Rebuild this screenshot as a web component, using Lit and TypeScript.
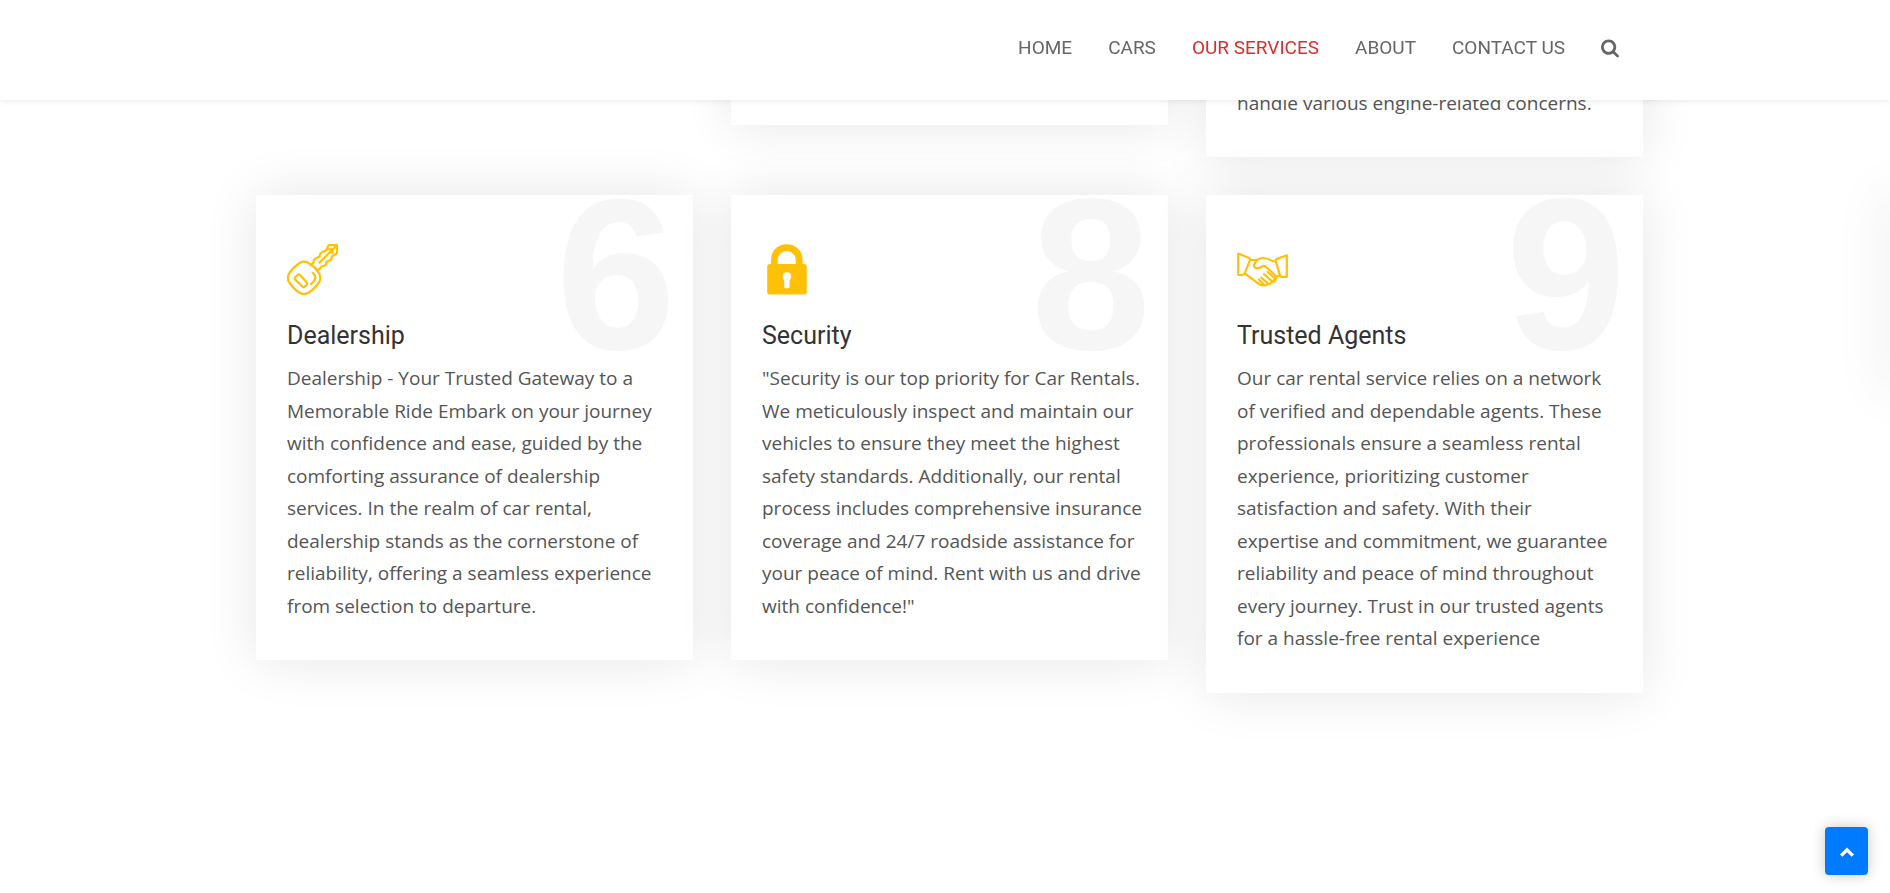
import { LitElement, html, css, svg } from "lit";
import { customElement, property } from "lit/decorators.js";

const keyIcon = svg`<svg class="icon" viewBox="0 0 51 51" fill="none" stroke="currentColor" stroke-width="2.200" stroke-linecap="round" stroke-linejoin="round" aria-hidden="true">
  <path d="M12.600 19Q17 16.400 21.400 19Q28.600 23 32.400 30Q34.200 34 32.400 37.600Q28 44.600 21.400 48.800Q17 51.200 12.600 48.800Q6 44.600 1.800 37.600Q0 34 1.800 30Q6 23.200 12.600 19Z"/>
  <path d="M12.800 30.800Q11.800 30 10.800 30.800L8 33.400Q7.200 34.400 8 35.400L15.600 42.800Q16.600 43.600 17.600 42.800L19.800 40.600Q20.600 39.600 19.800 38.600Z"/>
  <path d="M26 29Q28.800 31.600 28.200 34.200Q27.400 37.600 24 40"/>
  <path d="M24 21L26.600 18.400Q26.600 15.400 28.600 14.400L32.600 12.600Q32.800 9.200 35 8.200L39.400 6.200L41.600 1.200H50V9.200L45 12.400Q44.600 15.800 42.600 16.600L39.600 17.800Q39.200 21 37 21.800L34 22.800Q33 25.600 29.600 26.200"/>
  <path d="M32.600 18.600L49.600 1.400M42 5.400L45.800 5.200L45.600 9"/>
</svg>`;

const lockIcon = svg`<svg class="icon" viewBox="0 0 51 51" fill="currentColor" aria-hidden="true">
  <path fill-rule="evenodd" d="M9 20V16C9 7 15.500 0.300 24.800 0.300S40.600 7 40.600 16V20H42.600Q44.800 20.200 44.800 22.600V48Q44.800 50.500 42.300 50.500H8Q5.200 50.500 5.200 48V22.600Q5.200 20 8 20ZM15.800 20H33.800V16.200C33.800 10.800 29.800 7.200 24.800 7.200S15.800 10.800 15.800 16.200ZM22.200 36.200V42.600Q22.200 44.200 23.600 44.200H26Q27.600 44.200 27.600 42.600V36.200Q29.200 35 29.200 32.400Q28.800 28.200 24.900 28.200Q21 28.200 20.600 32.400Q20.600 35 22.200 36.200Z"/>
</svg>`;

const handshakeIcon = svg`<svg class="icon" viewBox="0 0 51 51" fill="none" stroke="currentColor" stroke-width="2.200" stroke-linecap="round" stroke-linejoin="round" aria-hidden="true">
  <path d="M1.200 9.600L12.200 14Q13.400 14.800 13 16.200L7.600 29.600Q7 31 5.600 31H1.200Z"/>
  <path d="M49.800 11.400L39.600 15Q38.400 15.600 38.800 17L43 31.600Q43.400 33 44.800 33H49.800Z"/>
  <path d="M13.400 16H20Q22.600 14 26 14Q31 14 34 16.400Q36.600 17.800 38.600 17.200"/>
  <path d="M20 16L17 20.600Q16.600 23.600 19.600 24.400Q22.600 24.400 25 22.400Q27 21.200 28.400 22.400L38.800 31.800Q40.600 34.600 37.200 35.600"/>
  <path d="M8.200 29.600L22 40.200Q25 41.600 28.600 41.200Q31 40.800 30.800 39.400L24.400 33.600"/>
  <path d="M30.800 39.600Q34.600 40.400 35 37.200L27 30.200M35 37.600Q39.400 37.600 38.400 34.600L30.600 28M22 35.400L26.600 40.400M41 31.800H43"/>
</svg>`;

@customElement("service-card")
export class ServiceCard extends LitElement {
  @property() heading = "";
  @property() text = "";
  @property() number = "";
  @property({ attribute: false }) icon: unknown = null;

  static styles = css`
    :host {
      display: block;
      position: relative;
      box-sizing: border-box;
      padding: 49px 25px 38px 31px;
      background: #fff;
      box-shadow: 0 0 50px rgba(0, 0, 0, 0.1);
    }
    .number {
      position: absolute;
      top: 19px;
      right: 17px;
      font: bold 216px/120px "Liberation Sans", Arial, sans-serif;
      color: #f6f6f6;
    }
    .content { position: relative; }
    .icon {
      display: block;
      width: 51px;
      height: 51px;
      margin-bottom: 25px;
      color: #ffc107;
    }
    .title {
      margin: 0 0 10px;
      font: 400 25px/32px Roboto, sans-serif;
      color: #333;
    }
    .text {
      margin: 0;
      font: 400 19px/1.71 "Open Sans", sans-serif;
      color: #555;
    }
  `;

  render() {
    return html`
      ${this.number ? html`<span class="number" aria-hidden="true">${this.number}</span>` : null}
      <div class="content">
        ${this.icon}
        ${this.heading ? html`<h3 class="title">${this.heading}</h3>` : null}
        ${this.text ? html`<p class="text">${this.text}</p>` : null}
      </div>
    `;
  }
}

const services = [
  {
    number: "6",
    icon: keyIcon,
    heading: "Dealership",
    text: "Dealership - Your Trusted Gateway to a Memorable Ride Embark on your journey with confidence and ease, guided by the comforting assurance of dealership services. In the realm of car rental, dealership stands as the cornerstone of reliability, offering a seamless experience from selection to departure.",
  },
  {
    number: "8",
    icon: lockIcon,
    heading: "Security",
    text: '"Security is our top priority for Car Rentals. We meticulously inspect and maintain our vehicles to ensure they meet the highest safety standards. Additionally, our rental process includes comprehensive insurance coverage and 24/7 roadside assistance for your peace of mind. Rent with us and drive with confidence!"',
  },
  {
    number: "9",
    icon: handshakeIcon,
    heading: "Trusted Agents",
    text: "Our car rental service relies on a network of verified and dependable agents. These professionals ensure a seamless rental experience, prioritizing customer satisfaction and safety. With their expertise and commitment, we guarantee reliability and peace of mind throughout every journey. Trust in our trusted agents for a hassle-free rental experience",
  },
];

const links = ["Home", "Cars", "Our Services", "About", "Contact Us"];

@customElement("app-root")
export class AppRoot extends LitElement {
  static styles = css`
    :host {
      display: block;
      position: relative;
      min-height: 100vh;
      overflow: hidden;
      background: #fff;
    }
    .header {
      position: fixed;
      inset: 0 0 auto;
      z-index: 2;
      padding-left: 9px;
      background: #fff;
      box-shadow: 0 0 6px rgba(0, 0, 0, 0.12);
    }
    .nav {
      display: flex;
      justify-content: flex-end;
      align-items: center;
      gap: 36px;
      box-sizing: border-box;
      height: 100px;
      max-width: 1387px;
      margin: 0 auto;
      padding: 0 24px 4px 0;
    }
    .link {
      font: 400 19px/24px Roboto, sans-serif;
      color: #666;
      text-decoration: none;
      text-transform: uppercase;
      white-space: nowrap;
    }
    .link.current { color: #db2d2e; }
    .search {
      display: block;
      padding: 0;
      border: 0;
      background: none;
      color: #666;
      cursor: pointer;
    }
    .search svg { display: block; width: 18px; height: 19px; }
    .main { padding: 0 0 80px 9px; }
    .grid {
      display: grid;
      grid-template-columns: repeat(3, minmax(0, 1fr));
      gap: 38px;
      align-items: start;
      max-width: 1387px;
      margin: 0 auto;
    }
    .previous { grid-column: 2; min-height: 125px; }
    .engine { padding-top: 87px; }
    .drawer {
      position: fixed;
      top: 190px;
      right: -10px;
      width: 10px;
      height: 204px;
      box-shadow: 0 0 50px rgba(0, 0, 0, 0.18);
    }
    .top {
      position: fixed;
      right: 22px;
      bottom: 18px;
      z-index: 3;
      display: grid;
      place-items: center;
      width: 43px;
      height: 48px;
      padding: 2px 0 0;
      border: 0;
      border-radius: 4px;
      background: #007bff;
      color: #fff;
      box-shadow: 0 0 14px rgba(0, 0, 0, 0.22);
      cursor: pointer;
    }
    .top svg { display: block; width: 16px; height: 12px; }
  `;

  private toTop() {
    window.scrollTo({ top: 0, behavior: "smooth" });
  }

  render() {
    return html`
      <header class="header">
        <nav class="nav" aria-label="Main">
          ${links.map(
            (name) => html`<a class="link ${name === "Our Services" ? "current" : ""}" href="#">${name}</a>`
          )}
          <button class="search" type="button" aria-label="Search">
            <svg viewBox="0 128 1664 1664" fill="currentColor" aria-hidden="true">
              <path d="M1152 832q0-185-131.500-316.500T704 384 387.500 515.500 256 832t131.500 316.500T704 1280t316.500-131.500T1152 832zm512 832q0 52-38 90t-90 38q-54 0-90-38l-343-342q-179 124-399 124-143 0-273.500-55.500t-225-150-150-225T0 832t55.500-273.500 150-225 225-150T704 128t273.500 55.500 225 150 150 225T1408 832q0 220-124 399l343 343q37 37 37 90z"/>
            </svg>
          </button>
        </nav>
      </header>
      <main class="main">
        <div class="grid">
          <service-card class="previous"></service-card>
          <service-card class="engine" .text=${"handle various engine-related concerns."}></service-card>
          ${services.map(
            (s) => html`<service-card
              .number=${s.number}
              .icon=${s.icon}
              .heading=${s.heading}
              .text=${s.text}
            ></service-card>`
          )}
        </div>
      </main>
      <div class="drawer"></div>
      <button class="top" type="button" aria-label="Back to top" @click=${this.toTop}>
        <svg viewBox="0 0 16 12" fill="none" stroke="currentColor" stroke-width="3.400" stroke-linecap="butt" stroke-linejoin="miter" aria-hidden="true">
          <path d="M2.200 9.600L8 3.800L13.800 9.600"/>
        </svg>
      </button>
    `;
  }
}
